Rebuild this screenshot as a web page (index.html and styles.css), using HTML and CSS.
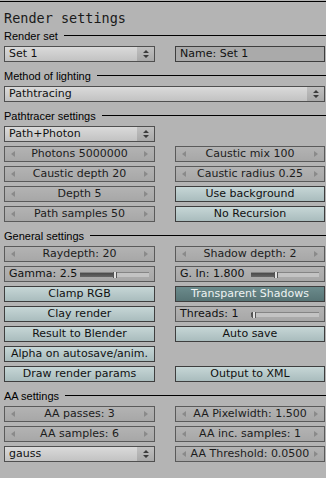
FILE: index.html
```html
<!DOCTYPE html>
<html lang="en">
<head>
  <meta charset="UTF-8">
  <meta name="viewport" content="width=device-width, initial-scale=1.0">
  <title>Render settings</title>
  <link rel="stylesheet" href="styles.css">
</head>
<body>
  <div class="panel">
    <div class="topline"></div>
    <h1 class="title">Render settings</h1>

    <div class="section first">Render set</div>
    <div class="grid">
      <div class="btn menu">
        <span class="menu-label">Set 1</span>
        <span class="updown"><svg width="10" height="10" viewBox="0 0 10 10"><path d="M2 4h6L5 1z M2 6h6L5 9z" fill="#3c3c3c"/></svg></span>
      </div>
      <div class="btn field">Name: Set 1</div>
    </div>

    <div class="section">Method of lighting</div>
    <div class="grid">
      <div class="btn menu full">
        <span class="menu-label">Pathtracing</span>
        <span class="updown"><svg width="10" height="10" viewBox="0 0 10 10"><path d="M2 4h6L5 1z M2 6h6L5 9z" fill="#3c3c3c"/></svg></span>
      </div>
    </div>

    <div class="section">Pathtracer settings</div>
    <div class="grid">
      <div class="btn menu">
        <span class="menu-label">Path+Photon</span>
        <span class="updown"><svg width="10" height="10" viewBox="0 0 10 10"><path d="M2 4h6L5 1z M2 6h6L5 9z" fill="#3c3c3c"/></svg></span>
      </div>
      <div></div>
      <div class="btn num"><i class="arr left"></i><span class="num-label">Photons 5000000</span><i class="arr right"></i></div>
      <div class="btn num"><i class="arr left"></i><span class="num-label">Caustic mix 100</span><i class="arr right"></i></div>
      <div class="btn num"><i class="arr left"></i><span class="num-label">Caustic depth 20</span><i class="arr right"></i></div>
      <div class="btn num"><i class="arr left"></i><span class="num-label">Caustic radius 0.25</span><i class="arr right"></i></div>
      <div class="btn num"><i class="arr left"></i><span class="num-label">Depth 5</span><i class="arr right"></i></div>
      <div class="btn toggle">Use background</div>
      <div class="btn num"><i class="arr left"></i><span class="num-label">Path samples 50</span><i class="arr right"></i></div>
      <div class="btn toggle">No Recursion</div>
    </div>

    <div class="section">General settings</div>
    <div class="grid">
      <div class="btn num"><i class="arr left"></i><span class="num-label">Raydepth: 20</span><i class="arr right"></i></div>
      <div class="btn num"><i class="arr left"></i><span class="num-label">Shadow depth: 2</span><i class="arr right"></i></div>
      <div class="btn slider">
        <span class="slider-label">Gamma: 2.5</span>
        <span class="track"><span class="fill" style="width: 33px"></span><span class="knob"></span></span>
      </div>
      <div class="btn slider">
        <span class="slider-label">G. In: 1.800</span>
        <span class="track"><span class="fill" style="width: 23px"></span><span class="knob"></span></span>
      </div>
      <div class="btn toggle">Clamp RGB</div>
      <div class="btn toggle on">Transparent Shadows</div>
      <div class="btn toggle">Clay render</div>
      <div class="btn slider">
        <span class="slider-label">Threads: 1</span>
        <span class="track"><span class="fill" style="width: 1px"></span><span class="knob"></span></span>
      </div>
      <div class="btn toggle">Result to Blender</div>
      <div class="btn toggle">Auto save</div>
      <div class="btn toggle">Alpha on autosave/anim.</div>
      <div></div>
      <div class="btn toggle">Draw render params</div>
      <div class="btn toggle">Output to XML</div>
    </div>

    <div class="section">AA settings</div>
    <div class="grid">
      <div class="btn num"><i class="arr left"></i><span class="num-label">AA passes: 3</span><i class="arr right"></i></div>
      <div class="btn num"><i class="arr left"></i><span class="num-label">AA Pixelwidth: 1.500</span><i class="arr right"></i></div>
      <div class="btn num"><i class="arr left"></i><span class="num-label">AA samples: 6</span><i class="arr right"></i></div>
      <div class="btn num"><i class="arr left"></i><span class="num-label">AA inc. samples: 1</span><i class="arr right"></i></div>
      <div class="btn menu">
        <span class="menu-label">gauss</span>
        <span class="updown"><svg width="10" height="10" viewBox="0 0 10 10"><path d="M2 4h6L5 1z M2 6h6L5 9z" fill="#3c3c3c"/></svg></span>
      </div>
      <div class="btn num"><i class="arr left"></i><span class="num-label">AA Threshold: 0.0500</span><i class="arr right"></i></div>
    </div>
  </div>
</body>
</html>
```

FILE: styles.css
```css
body {
  margin: 0;
  background: #b4b4b4;
  font-family: "DejaVu Sans", sans-serif;
  font-size: 11px;
  color: #111;
}
.panel {
  width: 321px;
  padding: 0 1px 0 4px;
}
.topline {
  height: 1px;
  margin: 1px -1px 0 -4px;
  background: #000;
}
.title {
  margin: 8px 0 0;
  height: 16px;
  font: normal 13.5px/16px "DejaVu Sans Mono", monospace;
  color: #1a1a1a;
}

/* section headers with a rule to the right edge */
.section {
  display: flex;
  height: 12px;
  margin: 8px -1px 4px 0;
  font: 11px/12px "Liberation Sans", sans-serif;
  color: #000;
}
.section.first {
  margin-top: 4px;
}
.section::after {
  content: "";
  flex: 1;
  height: 1px;
  margin: 5px 0 0 6px;
  background: #000;
}

.grid {
  display: grid;
  grid-template-columns: 151px 150px;
  grid-auto-rows: 16px;
  gap: 4px 20px;
}

/* buttons */
.btn {
  box-sizing: border-box;
  height: 16px;
  border: 1px solid #4f4f4f;
  line-height: 14px;
  white-space: nowrap;
  overflow: hidden;
}
.full {
  grid-column: 1 / -1;
}
.menu {
  display: flex;
  background: linear-gradient(#dadada, #c2c2c2);
}
.menu-label {
  flex: 1;
  padding-left: 4px;
}
.updown {
  width: 17px;
  display: flex;
  align-items: center;
  justify-content: center;
  background: linear-gradient(#c0c0c0, #a9a9a9);
}
.field {
  padding-left: 4px;
  background: #aaaaaa;
  border-color: #3e3e3e;
}
.num {
  display: flex;
  align-items: center;
  padding: 0 6px;
  background: linear-gradient(#b3b3b3, #a7a7a7);
  border-color: #5a5a5a;
  color: #1c1c1c;
}
.num-label {
  flex: 1;
  text-align: center;
}
.arr {
  width: 0;
  height: 0;
  border-top: 3px solid transparent;
  border-bottom: 3px solid transparent;
}
.arr.left {
  border-right: 4px solid #8a8a8a;
}
.arr.right {
  border-left: 4px solid #8a8a8a;
}
.toggle {
  text-align: center;
  background: linear-gradient(#c6d6d6, #a9bcbd);
  border-color: #3e3e3e;
  color: #111;
}
.toggle.on {
  background: linear-gradient(#6b8b8c, #577475);
  color: #eef2f2;
}

/* sliders */
.slider {
  display: flex;
  align-items: center;
  padding-left: 4px;
  background: linear-gradient(#b3b3b3, #a7a7a7);
  border-color: #5a5a5a;
}
.slider-label {
  width: 71px;
  flex: none;
}
.track {
  flex: 1;
  display: flex;
  align-items: center;
  height: 4px;
  margin-right: 5px;
  background: #c3c3c3;
  border-top: 1px solid #858585;
}
.fill {
  height: 4px;
  background: linear-gradient(#4a4a4a, #666);
}
.knob {
  width: 2px;
  height: 6px;
  background: #e2e2e2;
  border: 1px solid #555;
  border-width: 0 1px;
}
```
